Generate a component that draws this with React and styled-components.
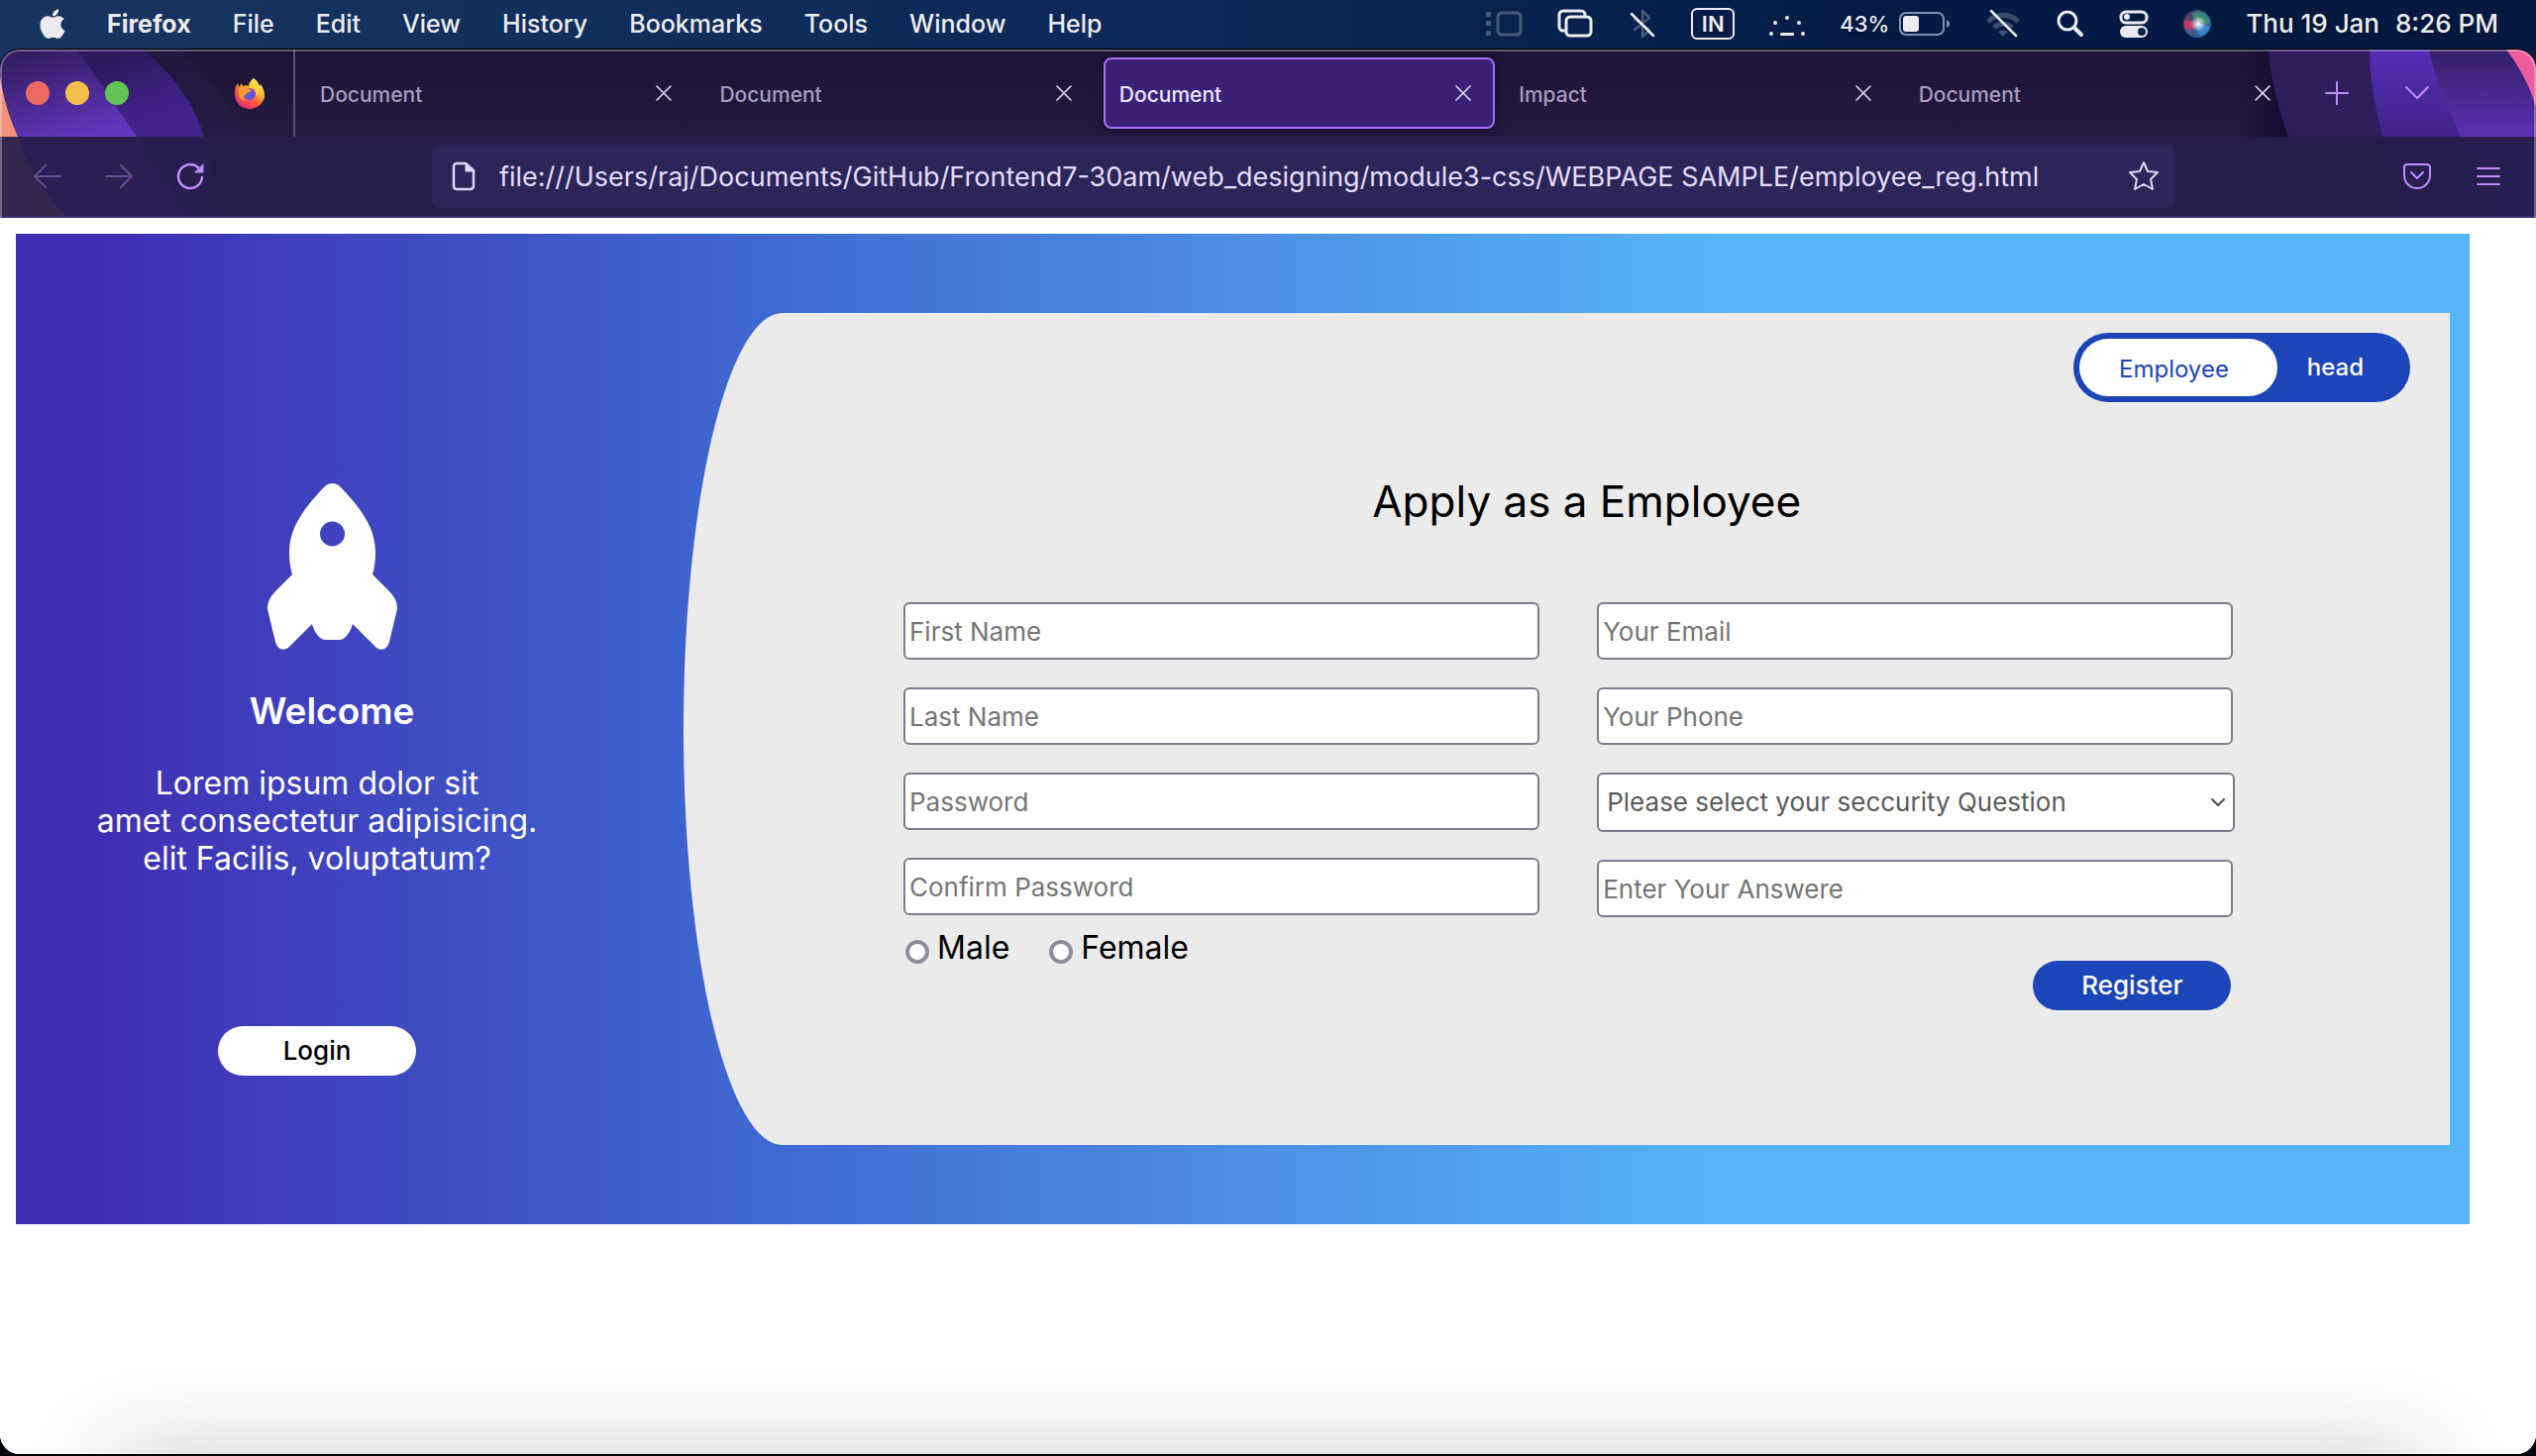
import React from "react";
import styled, { createGlobalStyle } from "styled-components";
import { FaApple } from "react-icons/fa";

const GlobalStyle = createGlobalStyle`
  *, *::before, *::after { box-sizing: border-box; }
  body {
    margin: 0;
    background: #04060e;
    font-family: Inter, "Liberation Sans", sans-serif;
  }
  button, input, select { font-family: inherit; margin: 0; }
  button { border: 0; background: none; padding: 0; color: inherit; cursor: pointer; }
  svg { display: block; flex: none; }
`;

const Desktop = styled.div`
  min-height: 100vh;
  display: flex;
  flex-direction: column;
  padding-bottom: 2px;
  background: linear-gradient(90deg, #18345f, #0c2858 45%, #051b44 75%, #05193f) top / 100% 80px no-repeat #04060e;
`;

/* ---------- system menu bar ---------- */

const MenuBar = styled.header`
  height: 48px;
  display: flex;
  align-items: center;
  justify-content: space-between;
  padding: 0 38px 0 40px;
  color: #ececf0;
  text-shadow: 0 2px 4px rgba(0, 0, 0, 0.35);
`;

const MenuGroup = styled.nav`
  display: flex;
  align-items: center;
  gap: ${(p) => p.$gap}px;
`;

const AppleLogo = styled(FaApple)`
  width: 26px;
  height: 34px;
`;

const MenuItem = styled.button`
  font-size: 25px;
  line-height: 40px;
  font-weight: ${(p) => (p.$bold ? 700 : 500)};
  white-space: nowrap;
`;

const InputSource = styled.span`
  width: 44px;
  height: 32px;
  border: 2px solid #ececf0;
  border-radius: 6px;
  font-size: 22px;
  line-height: 28px;
  font-weight: 600;
  text-align: center;
`;

const Battery = styled.span`
  display: flex;
  align-items: center;
  gap: 10px;
  font-size: 22px;
  line-height: 40px;
  font-weight: 500;
`;

const Clock = styled.time`
  display: flex;
  gap: 16px;
  font-size: 26px;
  line-height: 40px;
  font-weight: 500;
  white-space: nowrap;
`;

/* ---------- browser window ---------- */

const Window = styled.div`
  flex: 1;
  margin-top: 2px;
  display: flex;
  flex-direction: column;
  border-radius: 20px;
  overflow: hidden;
  background: #fff;
  box-shadow: 0 0 0 1px #000;
`;

const Chrome = styled.div`
  position: relative;
  background: linear-gradient(#1e1436, #24183f 88px);
  &::after {
    content: "";
    position: absolute;
    inset: 0;
    border: 2px solid rgba(255, 255, 255, 0.3);
    border-width: 2px 2px 0;
    border-radius: 20px 20px 0 0;
    pointer-events: none;
  }
`;

const ThemeArt = styled.svg`
  position: absolute;
  top: 0;
  ${(p) => p.$side}: 0;
`;

const TabStrip = styled.div`
  position: relative;
  height: 88px;
  display: flex;
  align-items: center;
  padding: 0 108px 0 26px;
`;

const TrafficLights = styled.div`
  display: flex;
  gap: 16px;
  margin-right: 106px;
`;

const Light = styled.button`
  width: 24px;
  height: 24px;
  border-radius: 50%;
  background: ${(p) => p.$color};
`;

const PinnedTab = styled.button`
  padding-right: 28px;
  height: 100%;
  border-right: 2px solid #5a4f70;
`;

const Tabs = styled.div`
  flex: 1;
  display: flex;
  gap: 8px;
  margin: 0 31px 0 9px;
`;

const Tab = styled.div`
  flex: 1;
  height: 72px;
  display: flex;
  align-items: center;
  padding: 0 22px 0 14px;
  border: 2px solid ${(p) => (p.$active ? "#a570f5" : "transparent")};
  border-radius: 8px;
  background: ${(p) => (p.$active ? "#3a2177" : "transparent")};
  box-shadow: ${(p) => (p.$active ? "0 0 8px rgba(0, 0, 0, 0.5)" : "none")};
  color: ${(p) => (p.$active ? "#ece4fb" : "#a79cbf")};
`;

const TabTitle = styled.button`
  flex: 1;
  padding-top: 4px;
  text-align: left;
  font-size: 21px;
  line-height: 32px;
  font-weight: 500;
`;

const IconButton = styled.button`
  color: ${(p) => p.$color || "#c08cfb"};
`;

const TabActions = styled.div`
  display: flex;
  align-items: center;
  gap: 57px;
`;

const Toolbar = styled.div`
  position: relative;
  height: 82px;
  display: flex;
  align-items: center;
  padding: 0 36px 0 34px;
  background: rgba(38, 29, 74, 0.93);
  border-bottom: 2px solid #3d3270;
`;

const ToolGroup = styled.div`
  display: flex;
  align-items: center;
  gap: ${(p) => p.$gap}px;
`;

const AddressBar = styled.div`
  flex: 1;
  height: 64px;
  display: flex;
  align-items: center;
  gap: 24px;
  margin: 0 230px;
  padding: 0 16px 0 20px;
  border-radius: 8px;
  background: #2c2558;
  color: #e0d6f5;
`;

const AddressInput = styled.input`
  flex: 1;
  min-width: 0;
  border: 0;
  outline: 0;
  padding: 2px 0 0;
  background: none;
  color: #e6dcfb;
  font-size: 27px;
  line-height: 40px;
  font-weight: 400;
`;

/* ---------- web page ---------- */

const Page = styled.main`
  position: relative;
  flex: 1;
  padding: 16px;
  overflow: hidden;
  background: #fff;
  &::after {
    content: "";
    position: absolute;
    left: 110px;
    right: 110px;
    bottom: -60px;
    height: 60px;
    box-shadow: 0 0 90px rgba(0, 0, 0, 0.24);
  }
`;

const Hero = styled.section`
  width: 98%;
  display: flex;
  padding: 80px 20px 80px 0;
  background: linear-gradient(90deg, #402eb3 3%, #3e62cd 27%, #57b5f7 70%);
`;

const Intro = styled.aside`
  flex: 0 0 674px;
  display: flex;
  flex-direction: column;
  align-items: center;
  padding: 172px 66px 0 0;
  color: #fff;
`;

const IntroHead = styled.div`
  display: flex;
  flex-direction: column;
  align-items: center;
  gap: 38px;
  padding-left: 30px;
`;

const IntroTitle = styled.h2`
  margin: 0;
  font-size: 37px;
  line-height: 48px;
  font-weight: 600;
`;

const IntroText = styled.p`
  margin: 30px 0 150px;
  font-size: 32px;
  line-height: 38px;
  text-align: center;
  white-space: pre-line;
`;

const PillButton = styled.button`
  width: 200px;
  height: 50px;
  border-radius: 25px;
  font-size: 26px;
  line-height: 32px;
  font-weight: 500;
  background: ${(p) => (p.$primary ? "#1c45b8" : "#fff")};
  color: ${(p) => (p.$primary ? "#fff" : "#000")};
`;

const Card = styled.div`
  flex: 1;
  min-height: 840px;
  display: flex;
  flex-direction: column;
  padding-top: 20px;
  border-radius: 100px 0 0 100px / 50% 0 0 50%;
  background: #ebebeb;
`;

const Toggle = styled.div`
  align-self: flex-end;
  width: 340px;
  height: 70px;
  display: flex;
  margin-right: 40px;
  padding: 6px;
  border-radius: 35px;
  background: #1c45b8;
`;

const ToggleOption = styled.button`
  width: ${(p) => (p.$active ? 200 : 116)}px;
  padding: ${(p) => (p.$active ? "4px 10px 0 0" : 0)};
  border-radius: 29px;
  font-size: 24px;
  line-height: 32px;
  font-weight: ${(p) => (p.$active ? 400 : 500)};
  background: ${(p) => (p.$active ? "#fff" : "none")};
  color: ${(p) => (p.$active ? "#1c45b8" : "#fff")};
`;

const FormTitle = styled.h1`
  margin: 70px 0 72px;
  padding-left: 40px;
  text-align: center;
  font-size: 44px;
  line-height: 60px;
  font-weight: 400;
`;

const Form = styled.form`
  display: grid;
  grid-template-columns: 1fr 1fr;
  gap: 56px;
  padding: 0 217px 0 222px;
`;

const Column = styled.div`
  display: flex;
  flex-direction: column;
  gap: 28px;
`;

const Field = styled.input`
  width: calc(100% - 2px);
  height: 58px;
  padding: 0 4px;
  border: 2px solid #7f7c8c;
  border-radius: 6px;
  background: #fff;
  font-size: 26px;
  line-height: 32px;
  &::placeholder { color: #757575; opacity: 1; }
`;

const SelectBox = styled.div`
  display: grid;
  align-items: center;
  > * { grid-area: 1 / 1; }
  > svg { justify-self: end; margin-right: 10px; pointer-events: none; }
`;

const Select = styled.select`
  appearance: none;
  width: 100%;
  height: 60px;
  padding: 0 40px 0 8px;
  border: 2px solid #7f7c8c;
  border-radius: 6px;
  background: #fff;
  color: #5b5b5b;
  font-size: 26px;
  line-height: 32px;
`;

const RadioRow = styled.div`
  display: flex;
  gap: 40px;
  margin-top: -15px;
  padding-left: 2px;
`;

const RadioLabel = styled.label`
  display: flex;
  align-items: center;
  gap: 8px;
  font-size: 32px;
  line-height: 40px;
`;

const Radio = styled.input`
  appearance: none;
  width: 24px;
  height: 24px;
  margin: 8px 0 0;
  border: 4px solid #8f8d9c;
  border-radius: 50%;
  background: #fff;
  &:checked { background: #1c45b8; }
`;

const FormActions = styled.div`
  display: flex;
  justify-content: flex-end;
  padding: 16px 4px 0 0;
`;

/* ---------- icons ---------- */

const Line = ({ w, h, sw = 2, children, ...rest }) => (
  <svg width={w} height={h} viewBox={`0 0 ${w} ${h}`} fill="none" stroke="currentColor" strokeWidth={sw}
    strokeLinecap="round" strokeLinejoin="round" aria-hidden="true" {...rest}>{children}</svg>
);

const StageIcon = () => (
  <Line w={38} h={28} sw={3} opacity="0.28">
    <rect x="13" y="3" width="23" height="22" rx="4" />
    <path d="M2 3h3v3H2zM2 12h3v3H2zM2 22h3v3H2z" fill="currentColor" strokeWidth="2" strokeLinejoin="miter" />
  </Line>
);

const WindowsIcon = () => (
  <Line w={38} h={32} sw={3}>
    <path d="M9 23H7a4 4 0 0 1-4-4V7a4 4 0 0 1 4-4h18a4 4 0 0 1 4 4v1" />
    <rect x="10" y="9" width="25" height="19" rx="4" />
  </Line>
);

const BluetoothOffIcon = () => (
  <Line w={30} h={32} sw={2.5}>
    <path d="M7 11l15 11-7 7V3l7 7L7 22" opacity="0.28" />
    <path d="M4 6l22 22" />
  </Line>
);

const DotsIcon = () => (
  <svg width="38" height="32" viewBox="0 0 38 32" fill="currentColor" aria-hidden="true">
    <circle cx="19" cy="10" r="2" /><circle cx="7" cy="15" r="2" /><circle cx="31" cy="15" r="2" />
    <circle cx="3" cy="26" r="2" /><circle cx="35" cy="26" r="2" />
    <rect x="12" y="25" width="14" height="3" rx="1" />
  </svg>
);

const BatteryIcon = () => (
  <svg width="52" height="26" viewBox="0 0 52 26" aria-hidden="true">
    <rect x="1" y="2" width="44" height="22" rx="6" fill="none" stroke="#8391ae" strokeWidth="2" />
    <rect x="4" y="5" width="16" height="16" rx="3" fill="#ececf0" />
    <path d="M48 9c2 1 3 2 3 4s-1 3-3 4z" fill="#8391ae" />
  </svg>
);

const WifiOffIcon = () => (
  <Line w={38} h={32} sw={5} strokeLinecap="butt">
    <g opacity="0.24">
      <path d="M4 14c8-9 22-9 30 0" />
      <path d="M10 20c5-5 13-5 18 0" />
      <path d="M19 29l-5-5c3-2 7-2 10 0z" fill="currentColor" stroke="none" />
    </g>
    <path d="M7 3l25 25" strokeWidth="2.5" strokeLinecap="round" />
  </Line>
);

const SearchIcon = () => (
  <Line w={30} h={30} sw={3}>
    <circle cx="12" cy="12" r="9" />
    <path d="M19 19l7 7" strokeWidth="4" />
  </Line>
);

const ControlIcon = () => (
  <svg width="30" height="30" viewBox="0 0 30 30" aria-hidden="true">
    <rect x="2" y="3" width="26" height="11" rx="5" fill="none" stroke="#ececf0" strokeWidth="3" />
    <circle cx="8" cy="8" r="3" fill="#ececf0" />
    <rect x="1" y="17" width="28" height="12" rx="6" fill="#ececf0" />
    <circle cx="23" cy="23" r="4" fill="#0a2148" />
  </svg>
);

const SiriIcon = () => (
  <svg width="30" height="30" viewBox="0 0 30 30" aria-hidden="true">
    <defs>
      <linearGradient id="siriBase" x1="0" y1="0" x2="1" y2="1">
        <stop offset="0" stopColor="#5a2c4c" /><stop offset="0.5" stopColor="#3f5f86" /><stop offset="1" stopColor="#2360a8" />
      </linearGradient>
      <radialGradient id="siriGlow"><stop offset="0" stopColor="#fff" /><stop offset="1" stopColor="#fff" stopOpacity="0" /></radialGradient>
    </defs>
    <circle cx="15" cy="15" r="14" fill="url(#siriBase)" />
    <path d="M9 5c8-5 19 1 19 11-6-1-12-3-19-11z" fill="#39946f" opacity="0.85" />
    <path d="M2 12c6-2 10 2 12 5-4 5-8 5-11 2-1-2-1-5-1-7z" fill="#d93463" opacity="0.85" />
    <path d="M15 16c5-2 10 0 13 2-2 5-6 8-10 9-3-3-4-7-3-11z" fill="#3f86d6" opacity="0.85" />
    <circle cx="16" cy="15" r="8" fill="url(#siriGlow)" />
  </svg>
);

const FirefoxIcon = () => (
  <svg width="32" height="32" viewBox="0 0 32 32" aria-hidden="true">
    <defs>
      <linearGradient id="ffBody" x1="0.85" y1="0.1" x2="0.3" y2="1">
        <stop offset="0" stopColor="#fff15a" /><stop offset="0.35" stopColor="#ffb52e" />
        <stop offset="0.65" stopColor="#fb5a3c" /><stop offset="1" stopColor="#e0287a" />
      </linearGradient>
      <radialGradient id="ffGlobe" cx="0.4" cy="0.65" r="0.7">
        <stop offset="0" stopColor="#4a63dc" /><stop offset="1" stopColor="#8a3be0" />
      </radialGradient>
    </defs>
    <path d="M20 1c4 3 5 5 6 8l1-2c3 4 4 8 4 11 0 8-7 14-15 14S1 26 1 17c0-5 1-8 3-11l1 4 3-4 1 3c2-1 4-1 6 0 0-3 2-6 5-8z" fill="url(#ffBody)" />
    <circle cx="16" cy="17" r="6" fill="url(#ffGlobe)" />
    <path d="M5 12c3-3 6-3 9-1 1 1 3 1 4 2-1 2-4 2-5 3 0 2-2 2-3 2-1 2 0 4 2 6-5 0-8-4-7-12z" fill="#ff9a2e" />
    <path d="M16 10c6 0 8 4 7 9 2-2 2-4 2-6-2-4-5-5-9-3z" fill="#ffd43a" />
  </svg>
);

const CloseIcon = () => <Line w={16} h={16} sw={1.6}><path d="M1 1l14 14M15 1L1 15" /></Line>;
const PlusIcon = () => <Line w={24} h={24}><path d="M12 1v22M1 12h22" /></Line>;
const ChevronIcon = () => <Line w={24} h={24}><path d="M1 6l11 11L23 6" /></Line>;
const BackIcon = () => <Line w={28} h={28}><path d="M27 14H1M12 3L1 14l11 11" /></Line>;
const ForwardIcon = () => <Line w={28} h={28}><path d="M1 14h26M16 3l11 11-11 11" /></Line>;
const ReloadIcon = () => (
  <Line w={28} h={28} sw={2.5}>
    <path d="M26 15A12 12 0 1 1 22 5" />
    <path d="M27 2v8h-8z" fill="currentColor" strokeWidth="1" />
  </Line>
);
const FileIcon = () => (
  <Line w={24} h={30} sw={2.5}>
    <path d="M14 2H5a3 3 0 0 0-3 3v20a3 3 0 0 0 3 3h14a3 3 0 0 0 3-3V9z" />
    <path d="M14 2v8h8z" fill="currentColor" strokeWidth="1" />
  </Line>
);
const StarIcon = () => (
  <Line w={32} h={32}>
    <path d="M16 2l4 9 10 1-7 7 2 10-9-5-9 5 2-10-7-7 10-1z" />
  </Line>
);
const PocketIcon = () => (
  <Line w={28} h={28}>
    <path d="M4 2h20a3 3 0 0 1 3 3v8a13 13 0 0 1-26 0V5a3 3 0 0 1 3-3z" />
    <path d="M8 10l6 6 6-6" />
  </Line>
);
const HamburgerIcon = () => <Line w={24} h={24}><path d="M1 4h22M1 12h22M1 20h22" /></Line>;
const CaretIcon = () => <Line w={14} h={14} color="#4a4a4a"><path d="M1 4l6 6 6-6" /></Line>;

const RocketIcon = () => (
  <svg width="131" height="168" viewBox="0 0 131 168" fill="#fff" aria-hidden="true">
    <path fillRule="evenodd" d="M65.500 0C62 0 60 1 57 4C35 27 22 46 22 70C22 78 23 86 25 92L9 108C3 114 0 119 0 127L8 160C10 168 17 170 22 165L45 142C47 148 49 152 52 155C54 157 56 158 59 158H72C75 158 77 157 79 155C82 152 84 148 86 142L109 165C114 170 121 168 123 160L131 127C131 119 128 114 122 108L106 92C108 86 109 78 109 70C109 46 96 27 74 4C71 1 69 0 65.500 0ZM65.500 38.500a12.500 12.500 0 1 1 0 25a12.500 12.500 0 1 1 0-25Z" />
  </svg>
);

const LeftArt = () => (
  <ThemeArt $side="left" width="260" height="168" viewBox="0 0 260 168" aria-hidden="true">
    <defs>
      <linearGradient id="la" x1="0" y1="0" x2="0.3" y2="1"><stop offset="0" stopColor="#2c1a58" /><stop offset="0.6" stopColor="#6335bb" /></linearGradient>
      <linearGradient id="lb" x1="0" y1="0" x2="0.4" y2="1"><stop offset="0" stopColor="#1f1440" /><stop offset="0.6" stopColor="#42238c" /></linearGradient>
    </defs>
    <path d="M180 0C215 25 235 60 246 88S258 140 260 168H0V0z" fill="#281a4a" opacity="0.5" />
    <path d="M143 0C176 24 196 56 206 88C214 115 219 140 220 168H0V0z" fill="url(#lb)" />
    <path d="M78 0L138 88L194 168H0V0z" fill="url(#la)" />
    <path d="M0 28C4 52 10 70 18 88C28 118 44 145 66 168H0z" fill="#f2937c" />
  </ThemeArt>
);

const RightArt = () => (
  <ThemeArt $side="right" width="300" height="168" viewBox="2260 0 300 168" aria-hidden="true">
    <defs>
      <linearGradient id="ra"><stop offset="0" stopColor="#150b30" stopOpacity="0" /><stop offset="1" stopColor="#150b30" /></linearGradient>
      <linearGradient id="rb" x1="0" y1="0" x2="0" y2="1"><stop offset="0" stopColor="#542eb6" /><stop offset="0.5" stopColor="#40248a" /></linearGradient>
      <linearGradient id="rc" x1="0" y1="0" x2="0" y2="1"><stop offset="0" stopColor="#35206a" /><stop offset="0.5" stopColor="#5c2fae" /></linearGradient>
    </defs>
    <path d="M2260 0H2310V88H2260z" fill="url(#ra)" />
    <path d="M2290 0C2292 30 2300 60 2310 88L2340 168H2560V0z" fill="#301d5c" />
    <path d="M2392 0C2392 30 2398 60 2405 88L2430 168H2560V0z" fill="url(#rb)" />
    <path d="M2452 0C2458 30 2472 60 2484 88L2515 168H2560V0z" fill="url(#rc)" />
    <path d="M2530 0C2545 20 2554 38 2560 58V0z" fill="#ee5c9c" />
  </ThemeArt>
);

const MENUS = ["File", "Edit", "View", "History", "Bookmarks", "Tools", "Window", "Help"];
const TABS = [["Document"], ["Document"], ["Document", true], ["Impact"], ["Document"]];

export default function App() {
  return (
    <Desktop>
      <GlobalStyle />
      <MenuBar>
        <MenuGroup $gap={42}>
          <IconButton $color="#ececf0" aria-label="Apple menu"><AppleLogo /></IconButton>
          <MenuItem $bold>Firefox</MenuItem>
          {MENUS.map((m) => <MenuItem key={m}>{m}</MenuItem>)}
        </MenuGroup>
        <MenuGroup $gap={34}>
          <StageIcon />
          <WindowsIcon />
          <BluetoothOffIcon />
          <InputSource>IN</InputSource>
          <DotsIcon />
          <Battery>43%<BatteryIcon /></Battery>
          <WifiOffIcon />
          <SearchIcon />
          <ControlIcon />
          <SiriIcon />
          <Clock><span>Thu 19 Jan</span><span>8:26 PM</span></Clock>
        </MenuGroup>
      </MenuBar>

      <Window>
        <Chrome>
          <LeftArt />
          <RightArt />
          <TabStrip>
            <TrafficLights>
              <Light $color="#ed6a5e" aria-label="Close window" />
              <Light $color="#f4be4f" aria-label="Minimize window" />
              <Light $color="#61c554" aria-label="Zoom window" />
            </TrafficLights>
            <PinnedTab aria-label="Firefox View"><FirefoxIcon /></PinnedTab>
            <Tabs>
              {TABS.map(([title, active], i) => (
                <Tab key={i} $active={active}>
                  <TabTitle>{title}</TabTitle>
                  <IconButton $color="#e0d6f5" aria-label="Close tab"><CloseIcon /></IconButton>
                </Tab>
              ))}
            </Tabs>
            <TabActions>
              <IconButton aria-label="New tab"><PlusIcon /></IconButton>
              <IconButton aria-label="List all tabs"><ChevronIcon /></IconButton>
            </TabActions>
          </TabStrip>
          <Toolbar>
            <ToolGroup $gap={44}>
              <IconButton $color="#6a4c98" aria-label="Back"><BackIcon /></IconButton>
              <IconButton $color="#6a4c98" aria-label="Forward"><ForwardIcon /></IconButton>
              <IconButton aria-label="Reload"><ReloadIcon /></IconButton>
            </ToolGroup>
            <AddressBar>
              <FileIcon />
              <AddressInput aria-label="Address" defaultValue="file:///Users/raj/Documents/GitHub/Frontend7-30am/web_designing/module3-css/WEBPAGE SAMPLE/employee_reg.html" />
              <IconButton $color="#e0d6f5" aria-label="Bookmark this page"><StarIcon /></IconButton>
            </AddressBar>
            <ToolGroup $gap={46}>
              <IconButton aria-label="Save to Pocket"><PocketIcon /></IconButton>
              <IconButton aria-label="Open application menu"><HamburgerIcon /></IconButton>
            </ToolGroup>
          </Toolbar>
        </Chrome>

        <Page>
          <Hero>
            <Intro>
              <IntroHead>
                <RocketIcon />
                <IntroTitle>Welcome</IntroTitle>
              </IntroHead>
              <IntroText>{"Lorem ipsum dolor sit\namet consectetur adipisicing.\nelit Facilis, voluptatum?"}</IntroText>
              <PillButton>Login</PillButton>
            </Intro>
            <Card>
              <Toggle>
                <ToggleOption $active>Employee</ToggleOption>
                <ToggleOption>head</ToggleOption>
              </Toggle>
              <FormTitle>Apply as a Employee</FormTitle>
              <Form onSubmit={(e) => e.preventDefault()}>
                <Column>
                  <Field type="text" placeholder="First Name" aria-label="First Name" />
                  <Field type="text" placeholder="Last Name" aria-label="Last Name" />
                  <Field type="password" placeholder="Password" aria-label="Password" />
                  <Field type="password" placeholder="Confirm Password" aria-label="Confirm Password" />
                  <RadioRow>
                    <RadioLabel><Radio type="radio" name="gender" value="male" />Male</RadioLabel>
                    <RadioLabel><Radio type="radio" name="gender" value="female" />Female</RadioLabel>
                  </RadioRow>
                </Column>
                <Column>
                  <Field type="email" placeholder="Your Email" aria-label="Your Email" />
                  <Field type="tel" placeholder="Your Phone" aria-label="Your Phone" />
                  <SelectBox>
                    <Select aria-label="Security question" defaultValue="">
                      <option value="">Please select your seccurity Question</option>
                    </Select>
                    <CaretIcon />
                  </SelectBox>
                  <Field type="text" placeholder="Enter Your Answere" aria-label="Enter Your Answere" />
                  <FormActions><PillButton $primary type="submit">Register</PillButton></FormActions>
                </Column>
              </Form>
            </Card>
          </Hero>
        </Page>
      </Window>
    </Desktop>
  );
}
